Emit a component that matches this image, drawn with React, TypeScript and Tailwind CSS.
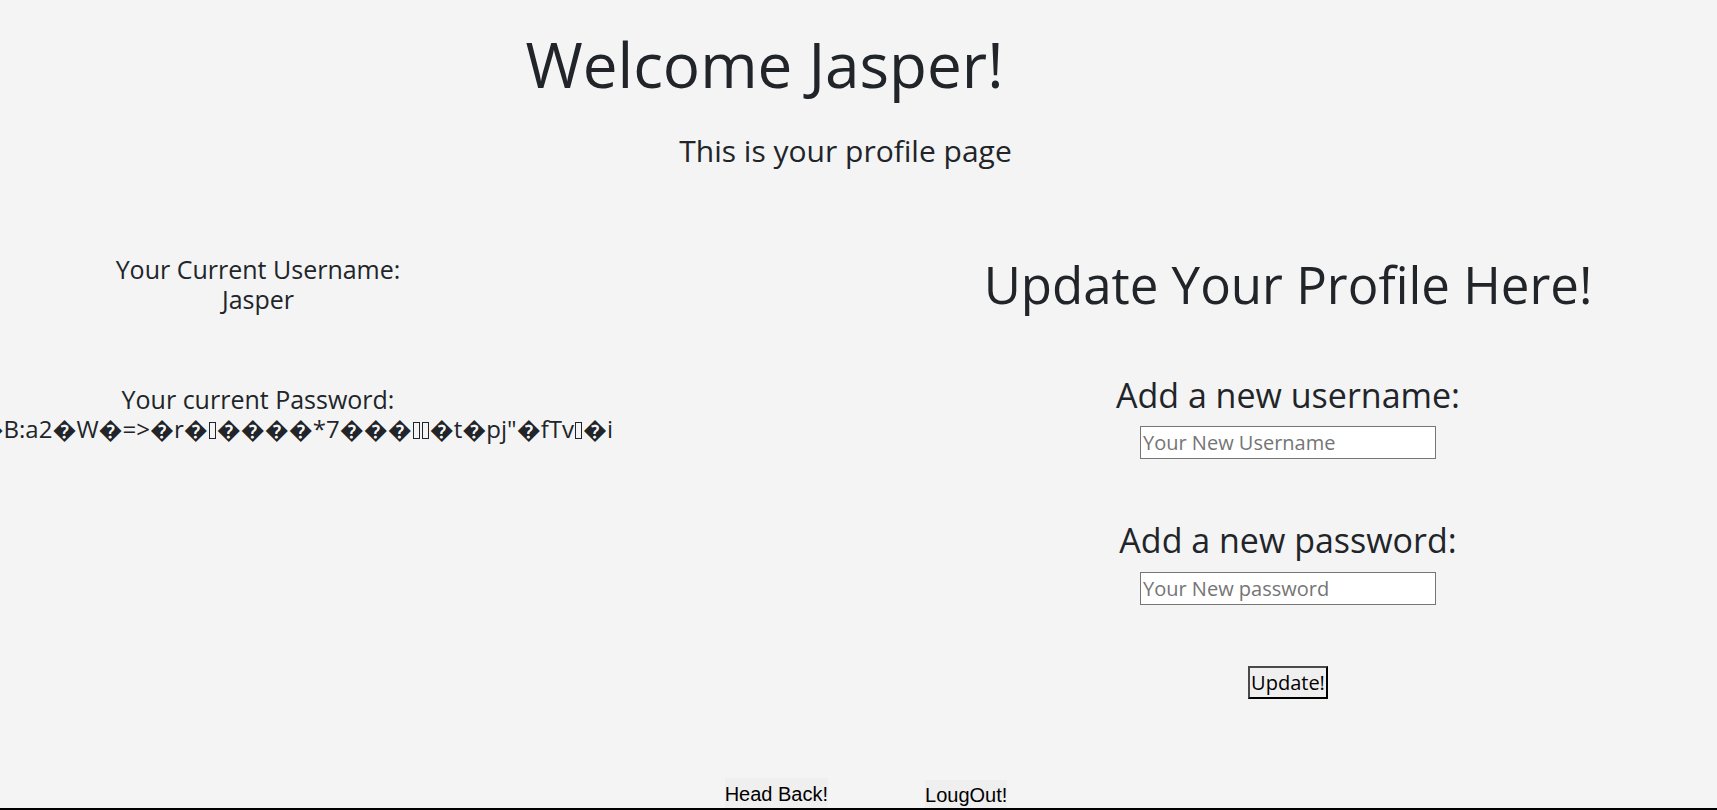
import { Fragment } from "react"

const comic = "font-['Comic_Sans_MS','Open_Sans',sans-serif]"

// raw bytes of the stored hash, shown as-is (▯ = missing glyph box)
const password = "$2\uFFFDxL\uFFFDB:a2\uFFFDW\uFFFD=>\uFFFDr\uFFFD▯\uFFFD\uFFFD\uFFFD\uFFFD*7\uFFFD\uFFFD\uFFFD▯▯\uFFFDt\uFFFDpj\"\uFFFDfTv▯\uFFFDi"

function Tofu() {
  return <span className="mx-[1px] inline-block h-[17px] w-[7px] border border-[#212529] align-[-1px]" />
}

function Garbled({ text }: { text: string }) {
  return (
    <>
      {text.split("▯").map((part, i) => (
        <Fragment key={i}>
          {i > 0 && <Tofu />}
          {part}
        </Fragment>
      ))}
    </>
  )
}

export default function App() {
  return (
    <div className={`flex h-[810px] flex-col overflow-hidden bg-[#f4f4f4] text-[#212529] ${comic}`}>
      {/* header */}
      <h1 className="mt-[27px] pr-[188px] text-center text-[62px] leading-[1.2] font-normal">Welcome Jasper!</h1>
      <p className="mt-[32px] pr-[26px] text-center text-[30px] leading-[36px]">This is your profile page</p>

      <div className="mt-[85px] flex items-start">
        {/* current info */}
        <div className="flex w-[516px] flex-col items-center text-[25px] leading-[30px]">
          <div>Your Current Username:</div>
          <div>Jasper</div>
          <div className="mt-[70px]">Your current Password:</div>
          <div className="whitespace-nowrap text-[24px]">
            <Garbled text={password} />
          </div>
        </div>

        {/* update form */}
        <div className="ml-auto flex w-[858px] flex-col items-center">
          <h2 className="text-[51px] leading-[1.2] font-normal">Update Your Profile Here!</h2>

          <label className="mt-[59px] text-[34px] leading-[1.2]">Add a new username:</label>
          <input
            type="text"
            placeholder="Your New Username"
            className="mt-[11px] h-[33px] w-[296px] border border-[#767676] bg-white px-[2px] text-[20px] outline-none placeholder:text-[#757575]"
          />

          <label className="mt-[61px] text-[34px] leading-[1.2]">Add a new password:</label>
          <input
            type="password"
            placeholder="Your New password"
            className="mt-[11px] h-[33px] w-[296px] border border-[#767676] bg-white px-[2px] text-[20px] outline-none placeholder:text-[#757575]"
          />

          <button className="mt-[61px] h-[33px] border-2 border-t-[#4a4a4a] border-r-black border-b-black border-l-[#4a4a4a] bg-[#efefef] px-[1px] text-[20px] leading-none text-black">
            Update!
          </button>
        </div>
      </div>

      {/* bottom nav */}
      <div className="mt-auto flex items-end justify-center gap-[97px] pl-[15px] font-['Liberation_Sans',Arial,sans-serif] text-[20px] text-black">
        <button className="h-[30px] bg-[#efefef] pt-[2px] leading-[23px]">Head Back!</button>
        <button className="h-[28px] bg-[#efefef] pt-[2px] leading-[23px]">LougOut!</button>
      </div>
      <div className="border-t-2 border-black" />
    </div>
  )
}
